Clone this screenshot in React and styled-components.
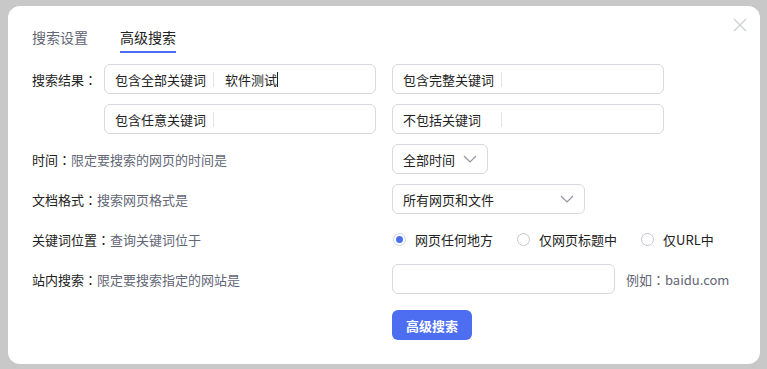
import styled, { createGlobalStyle } from "styled-components";

const GlobalStyle = createGlobalStyle`
  html, body {
    margin: 0;
    padding: 0;
    background: #c8c8c8;
  }
  body {
    font-family: "Noto Sans CJK SC", "Noto Sans", sans-serif;
    font-size: 13px;
    color: #222;
  }
`;

const Page = styled.div`
  width: 767px;
  height: 369px;
  padding: 6px 0 0 8px;
  box-sizing: border-box;
`;

const Modal = styled.div`
  position: relative;
  width: 752px;
  height: 358px;
  background: #fff;
  border-radius: 12px;
  box-sizing: border-box;
  padding: 18px 24px 0 24px;
`;

const Close = styled.div`
  position: absolute;
  top: 11px;
  right: 12px;
  width: 16px;
  height: 16px;
`;

const Tabs = styled.div`
  display: flex;
  gap: 32px;
  height: 29px;
  margin-bottom: 11px;
`;

const Tab = styled.div`
  position: relative;
  font-size: 14px;
  line-height: 26px;
  color: ${(p) => (p.active ? "#222" : "#626675")};
  &::after {
    content: "";
    display: ${(p) => (p.active ? "block" : "none")};
    position: absolute;
    left: 0;
    right: 0;
    bottom: 0;
    height: 2px;
    background: #4e6ef2;
  }
`;

const Form = styled.div`
  display: flex;
  flex-direction: column;
  gap: 10px;
`;

const Row = styled.div`
  display: grid;
  grid-template-columns: 360px 1fr;
  height: 30px;
  align-items: center;
`;

const Cell = styled.div`
  display: flex;
  align-items: center;
  height: 30px;
`;

const FieldLabel = styled.div`
  width: 72px;
  flex-shrink: 0;
  color: #222;
`;

const Colon = styled.span`
  font-family: "Noto Sans CJK TC", "Noto Sans CJK SC", sans-serif;
`;

const Desc = styled.span`
  color: #626675;
`;

const Box = styled.div`
  display: flex;
  align-items: center;
  width: ${(p) => p.w}px;
  height: 30px;
  box-sizing: border-box;
  border: 1px solid #d7d9e0;
  border-radius: 6px;
  padding: 0 10px;
  background: #fff;
`;

const Prefix = styled.div`
  width: 98px;
  flex-shrink: 0;
  color: #222;
`;

const Sep = styled.div`
  width: 1px;
  height: 15px;
  background: #e3e4e8;
  margin-right: 11px;
`;

const Value = styled.div`
  color: #222;
  border-right: 1px solid #222;
  line-height: 15px;
`;

const SelectText = styled.div`
  flex: 1;
  color: #222;
`;

const Chevron = () => (
  <svg width="14" height="8" viewBox="0 0 14 8" fill="none">
    <path d="M1 1l6 6 6-6" stroke="#9195a3" strokeWidth="1.2" />
  </svg>
);

const RadioGroup = styled.div`
  display: flex;
  align-items: center;
  gap: 24px;
  padding-left: 1px;
`;

const RadioItem = styled.label`
  display: flex;
  align-items: center;
  gap: 9px;
  color: #222;
`;

const Circle = styled.span`
  width: 13px;
  height: 13px;
  box-sizing: border-box;
  border-radius: 50%;
  border: 1px solid ${(p) => (p.checked ? "#c9d3fb" : "#c4c7ce")};
  display: flex;
  align-items: center;
  justify-content: center;
  &::after {
    content: "";
    display: ${(p) => (p.checked ? "block" : "none")};
    width: 7px;
    height: 7px;
    border-radius: 50%;
    background: #4e6ef2;
  }
`;

const Hint = styled.span`
  margin-left: 11px;
  color: #626675;
`;

const SubmitRow = styled.div`
  display: grid;
  grid-template-columns: 360px 1fr;
  margin-top: 16px;
`;

const Button = styled.button`
  width: 80px;
  height: 30px;
  border: none;
  border-radius: 6px;
  background: #4e6ef2;
  color: #fff;
  font-family: inherit;
  font-size: 13px;
  font-weight: 700;
  padding: 0;
`;

const KeywordBox = ({ prefix, value, w = 272 }) => (
  <Box w={w}>
    <Prefix>{prefix}</Prefix>
    <Sep />
    {value && <Value>{value}</Value>}
  </Box>
);

const Label = ({ title, desc }) => (
  <Cell>
    {title}
    <Colon>：</Colon>
    <Desc>{desc}</Desc>
  </Cell>
);

export default function App() {
  return (
    <Page>
      <GlobalStyle />
      <Modal>
        <Close>
          <svg width="16" height="16" viewBox="0 0 16 16">
            <path d="M2 2l12 12M14 2L2 14" stroke="#cfd1d6" strokeWidth="1.4" />
          </svg>
        </Close>
        <Tabs>
          <Tab>搜索设置</Tab>
          <Tab active>高级搜索</Tab>
        </Tabs>
        <Form>
          <Row>
            <Cell>
              <FieldLabel>
                搜索结果<Colon>：</Colon>
              </FieldLabel>
              <KeywordBox prefix="包含全部关键词" value="软件测试" />
            </Cell>
            <Cell>
              <KeywordBox prefix="包含完整关键词" />
            </Cell>
          </Row>
          <Row>
            <Cell>
              <FieldLabel />
              <KeywordBox prefix="包含任意关键词" />
            </Cell>
            <Cell>
              <KeywordBox prefix="不包括关键词" />
            </Cell>
          </Row>
          <Row>
            <Label title="时间" desc="限定要搜索的网页的时间是" />
            <Cell>
              <Box w={96}>
                <SelectText>全部时间</SelectText>
                <Chevron />
              </Box>
            </Cell>
          </Row>
          <Row>
            <Label title="文档格式" desc="搜索网页格式是" />
            <Cell>
              <Box w={193}>
                <SelectText>所有网页和文件</SelectText>
                <Chevron />
              </Box>
            </Cell>
          </Row>
          <Row>
            <Label title="关键词位置" desc="查询关键词位于" />
            <Cell>
              <RadioGroup>
                <RadioItem>
                  <Circle checked />
                  网页任何地方
                </RadioItem>
                <RadioItem>
                  <Circle />
                  仅网页标题中
                </RadioItem>
                <RadioItem>
                  <Circle />
                  仅URL中
                </RadioItem>
              </RadioGroup>
            </Cell>
          </Row>
          <Row>
            <Label title="站内搜索" desc="限定要搜索指定的网站是" />
            <Cell>
              <Box w={223} />
              <Hint>
                例如<Colon>：</Colon>baidu.com
              </Hint>
            </Cell>
          </Row>
        </Form>
        <SubmitRow>
          <div />
          <div>
            <Button>高级搜索</Button>
          </div>
        </SubmitRow>
      </Modal>
    </Page>
  );
}
